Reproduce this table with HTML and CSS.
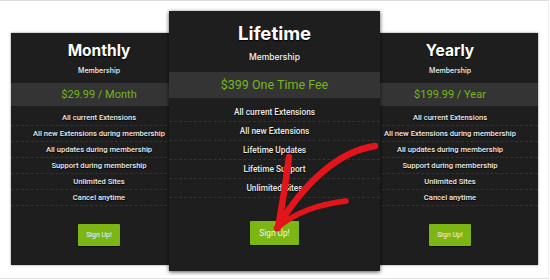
FILE: index.html
```html
<!DOCTYPE html>
<html>
<head>
<meta charset="utf-8">
<link rel="stylesheet" href="styles.css">
</head>
<body>
<div class="frame">
  <div class="plans">
    <div class="card side">
      <h2 class="title">Monthly</h2>
      <div class="sub">Membership</div>
      <div class="price">$29.99 / Month</div>
      <ul class="features">
        <li>All current Extensions</li>
        <li>All new Extensions during membership</li>
        <li>All updates during membership</li>
        <li>Support during membership</li>
        <li>Unlimited Sites</li>
        <li>Cancel anytime</li>
      </ul>
      <a class="btn">Sign Up!</a>
    </div>
    <div class="card featured">
      <h2 class="title">Lifetime</h2>
      <div class="sub">Membership</div>
      <div class="price">$399 One Time Fee</div>
      <ul class="features">
        <li>All current Extensions</li>
        <li>All new Extensions</li>
        <li>Lifetime Updates</li>
        <li>Lifetime Support</li>
        <li>Unlimited Sites</li>
      </ul>
      <a class="btn">Sign Up!</a>
    </div>
    <div class="card side right">
      <h2 class="title">Yearly</h2>
      <div class="sub">Membership</div>
      <div class="price">$199.99 / Year</div>
      <ul class="features">
        <li>All current Extensions</li>
        <li>All new Extensions during membership</li>
        <li>All updates during membership</li>
        <li>Support during membership</li>
        <li>Unlimited Sites</li>
        <li>Cancel anytime</li>
      </ul>
      <a class="btn">Sign Up!</a>
    </div>
  </div>
  <svg class="arrow" viewBox="0 0 550 280" width="550" height="280">
    <path class="thick" d="M375 145 C340 150 305 180 277 227" />
    <path class="thick" d="M289 156 C286 180 282 205 278 227" />
    <path d="M278 226 C295 212 320 203 346 200" />
  </svg>
</div>
</body>
</html>
```

FILE: styles.css
```css
* { box-sizing: border-box; }
html, body {
  margin: 0;
  padding: 0;
  background: #fff;
}
.frame {
  position: relative;
  width: 549px;
  height: 279px;
  border-top: 1px solid #dcdcdc;
  border-right: 1px solid #ececec;
  border-bottom: 1px solid #e4e4e4;
  overflow: hidden;
}
.plans {
  display: flex;
  align-items: flex-start;
  padding: 10px 0 0 11px;
}
.card {
  background: #1e1e1e;
  color: #f2f2f2;
  text-align: center;
  display: flex;
  flex-direction: column;
  align-items: center;
  font-family: Roboto, "Liberation Sans", sans-serif;
}
.side {
  width: 176px;
  margin-top: 22px;
  height: 232px;
  padding-top: 10px;
  box-shadow: 0 0 2px rgba(0,0,0,0.5);
  position: relative;
  z-index: 1;
}
.featured {
  width: 211px;
  height: 260px;
  margin-left: -18px;
  padding-top: 12.5px;
  position: relative;
  z-index: 2;
  box-shadow: 0 1px 4px rgba(0,0,0,0.7);
}
.right {
  margin-left: -18px;
}
.title {
  margin: 0;
  font-family: Inter, "Open Sans", sans-serif;
  font-weight: 700;
  font-size: 15.5px;
  line-height: 1;
  color: #fff;
  text-shadow: 0 1px 1px #000;
}
.featured .title { font-size: 18.5px; }
.sub {
  font-family: Inter, "Open Sans", sans-serif;
  font-size: 7px;
  font-weight: 500;
  line-height: 1;
  margin-top: 8.5px;
  color: #f0f0f0;
}
.featured .sub { font-size: 8.5px; margin-top: 10.7px; }
.price {
  align-self: stretch;
  background: #343434;
  color: #77b51b;
  height: 23px;
  margin-top: 9px;
  font-size: 11px;
  line-height: 23px;
}
.featured .price {
  height: 26px;
  line-height: 26px;
  font-size: 12.5px;
  margin-top: 10.8px;
}
.features {
  list-style: none;
  margin: 0;
  padding: 4px 0 0;
  align-self: stretch;
}
.features li {
  height: 16px;
  line-height: 15px;
  font-size: 7.6px;
  font-weight: 500;
  border-bottom: 1px dashed #323232;
  color: #ececec;
  text-shadow: 0 1px 1px #000;
}
.featured .features { padding-top: 5px; }
.featured .features li {
  height: 19px;
  line-height: 18px;
  font-size: 8.3px;
}
.btn {
  display: block;
  margin-top: 18px;
  width: 42px;
  height: 22px;
  line-height: 22px;
  background: #7cb514;
  border-radius: 1px;
  color: #f4f4f4;
  font-size: 7px;
  box-shadow: 0 1px 1px rgba(0,0,0,0.5);
}
.featured .btn {
  margin-top: 23px;
  width: 49px;
  height: 24px;
  line-height: 24px;
  font-size: 8.3px;
}
.arrow {
  position: absolute;
  left: 0;
  top: 0;
  z-index: 5;
  fill: none;
  stroke: #e4141b;
  stroke-width: 5.5;
  stroke-linecap: round;
  stroke-linejoin: round;
}
.arrow .thick { stroke-width: 6.5; }
```
